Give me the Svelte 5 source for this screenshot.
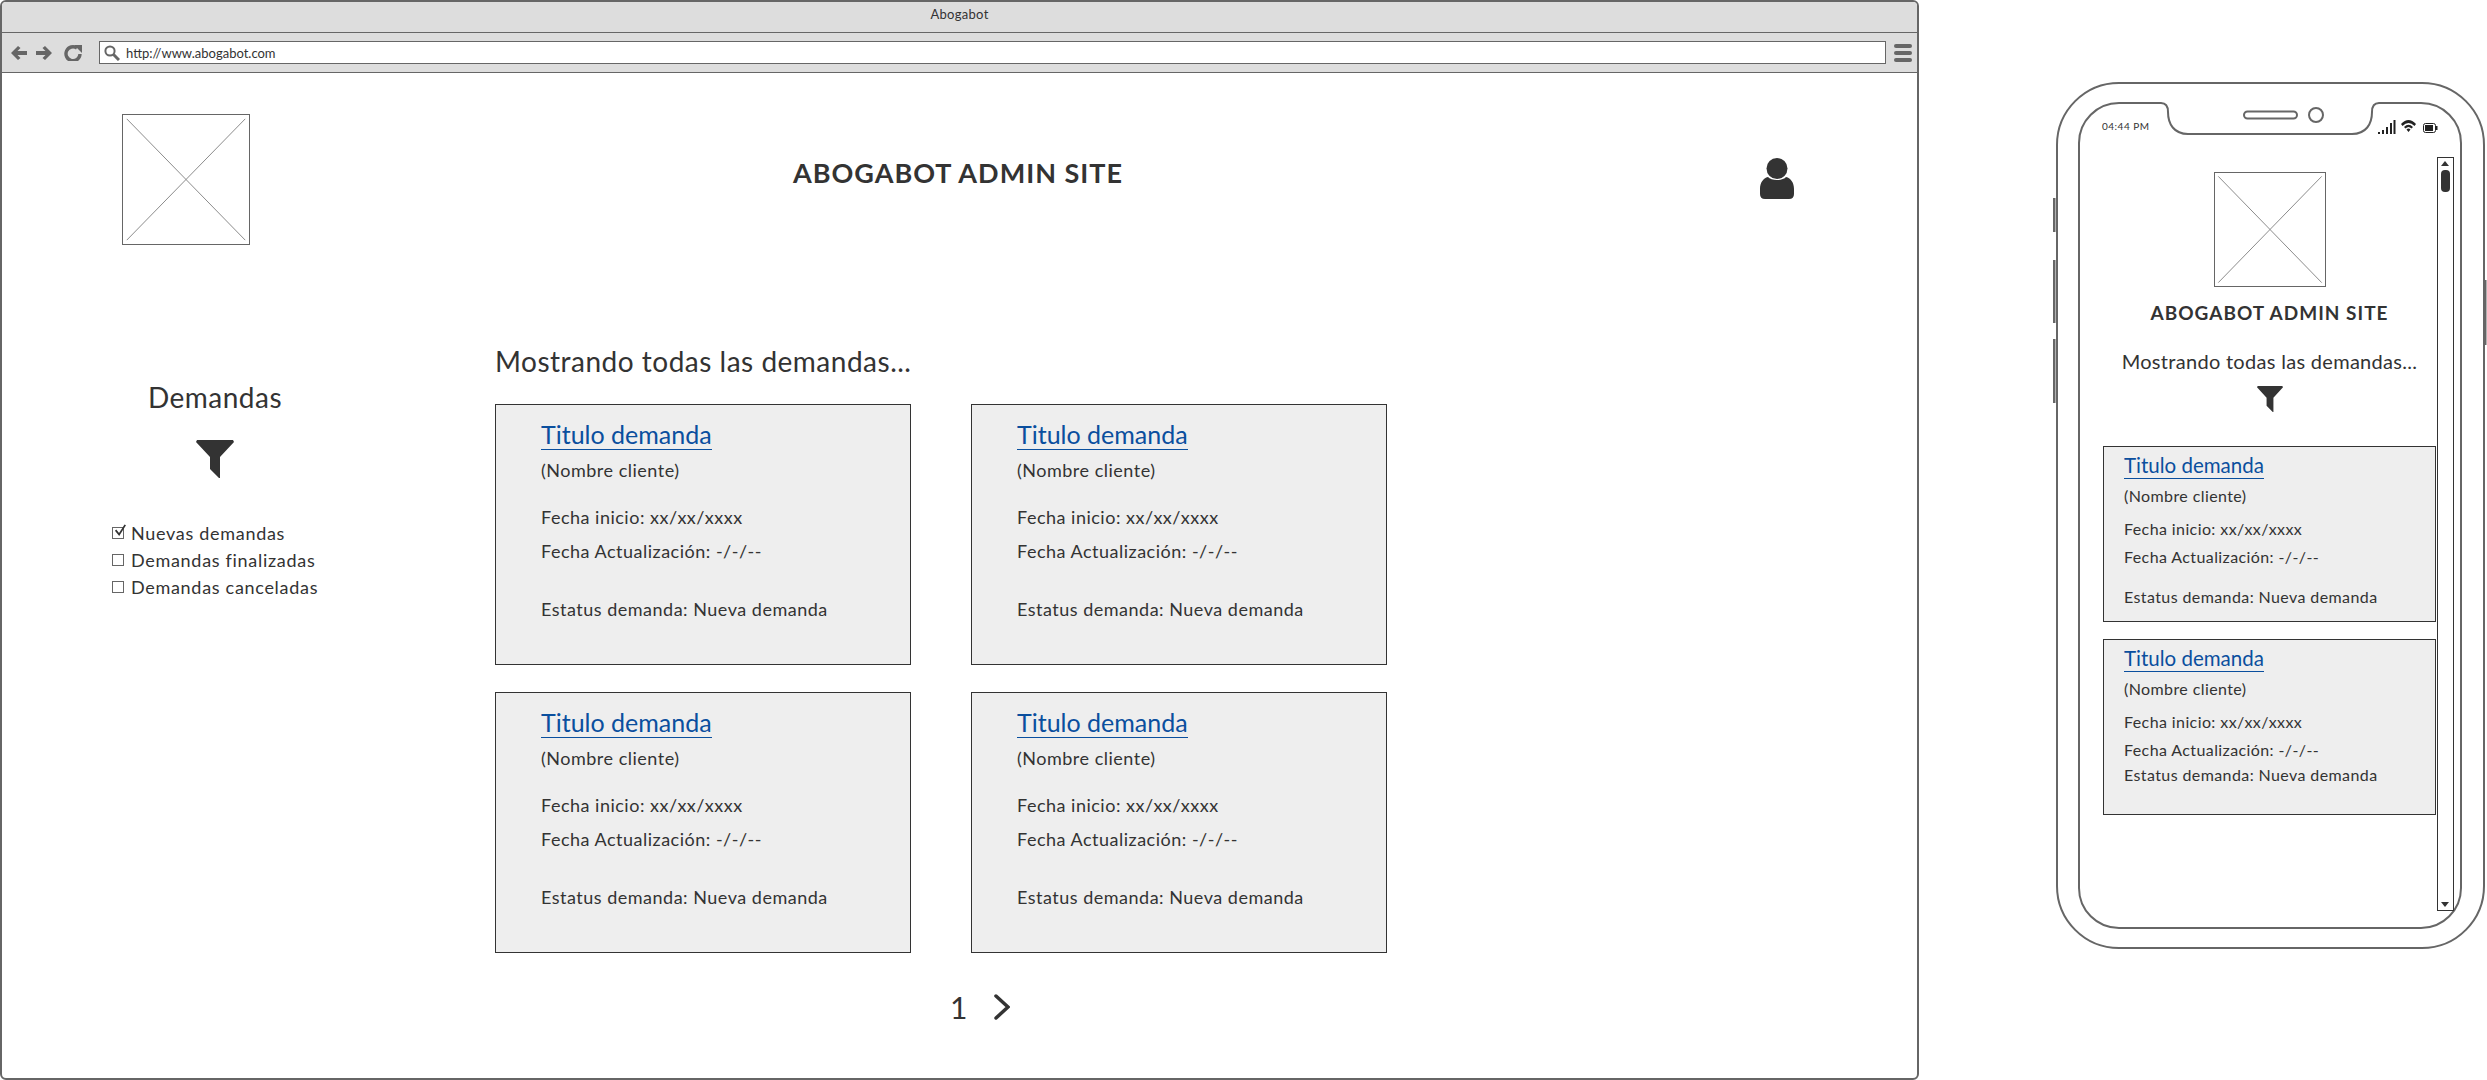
<script>
  const cards = [1, 2, 3, 4];
  const filters = [
    { label: 'Nuevas demandas', checked: true },
    { label: 'Demandas finalizadas', checked: false },
    { label: 'Demandas canceladas', checked: false }
  ];
</script>

{#snippet placeholder(cls)}
  <svg class="placeholder {cls}" viewBox="0 0 100 100" preserveAspectRatio="none">
    <path d="M3 3 L97 97 M97 3 L3 97" stroke="#8c8c8c" stroke-width="1" vector-effect="non-scaling-stroke" fill="none" />
  </svg>
{/snippet}

{#snippet funnel(cls)}
  <svg class={cls} viewBox="0 0 38 38">
    <path d="M1 0 H37 L38 2 L24 17 V38 L23 38 L14 29 V17 L0 2 Z" fill="#333" />
  </svg>
{/snippet}

{#snippet card(short)}
  <div class="card" class:short>
    <a class="card-title" href="#top">Titulo demanda</a>
    <div class="client">(Nombre cliente)</div>
    <div class="start">Fecha inicio: xx/xx/xxxx</div>
    <div class="updated">Fecha Actualización: -/-/--</div>
    <div class="status">Estatus demanda: Nueva demanda</div>
  </div>
{/snippet}

<div class="page">
  <div class="browser">
    <div class="titlebar">Abogabot</div>
    <div class="toolbar">
      <svg class="nav" viewBox="0 0 71 16">
        <path d="M0 8 L7 1 L9.500 3 L6.500 6 H16 V10 H6.500 L9.500 13 L7 15 Z" fill="#666" />
        <path d="M41 8 L34 1 L31.500 3 L34.500 6 H25 V10 H34.500 L31.500 13 L34 15 Z" fill="#666" />
        <path d="M69 9 A7 7 0 1 1 66 3" fill="none" stroke="#666" stroke-width="3.4" />
        <path d="M63 0 H71 V8 Z" fill="#666" />
      </svg>
      <div class="address">
        <svg class="search" viewBox="0 0 16 16">
          <circle cx="6" cy="6" r="4.6" fill="none" stroke="#666" stroke-width="2" />
          <path d="M9.5 9.5 L15 15" stroke="#666" stroke-width="3" />
        </svg>
        <span>http://www.abogabot.com</span>
      </div>
      <div class="burger"><i></i><i></i><i></i></div>
    </div>

    <div class="content">
      <header class="header">
        {@render placeholder('logo')}
        <h1>ABOGABOT ADMIN SITE</h1>
        <svg class="user" viewBox="0 0 34 41">
          <circle cx="17" cy="10.5" r="10.5" fill="#333" />
          <path d="M8 19 C11 23 23 23 26 19 C31 20 34 25 34 31 V36 Q34 41 29 41 H5 Q0 41 0 36 V31 C0 25 3 20 8 19 Z" fill="#333" />
        </svg>
      </header>

      <div class="columns">
        <aside class="sidebar">
          <h2>Demandas</h2>
          {@render funnel('funnel')}
          <ul>
            {#each filters as f}
              <li>
                <span class="box">
                  {#if f.checked}
                    <svg viewBox="0 0 16 16"><path d="M3 7 L7 12 L14 1" fill="none" stroke="#333" stroke-width="2" /></svg>
                  {/if}
                </span>
                {f.label}
              </li>
            {/each}
          </ul>
        </aside>

        <main class="results">
          <h3>Mostrando todas las demandas...</h3>
          <div class="grid">
            {#each cards as c}
              {@render card(false)}
            {/each}
          </div>
          <div class="pager">
            <span>1</span>
            <svg viewBox="0 0 16 26"><path d="M2 2 L14 13 L2 24" fill="none" stroke="#333" stroke-width="3.500" stroke-linecap="round" /></svg>
          </div>
        </main>
      </div>
    </div>
  </div>

  <div class="phone">
    <svg class="frame" viewBox="2053 0 434 1080">
      <g fill="none" stroke="#666" stroke-width="2">
        <rect x="2057" y="83" width="427" height="865" rx="62" />
        <path d="M2119 103 H2161 Q2168 103 2168 112 C2168 124 2174 134 2188 134 H2352 C2366 134 2372 124 2372 112 Q2372 103 2379 103 H2421 A40 40 0 0 1 2461 143 V888 A40 40 0 0 1 2421 928 H2119 A40 40 0 0 1 2079 888 V143 A40 40 0 0 1 2119 103 Z" />
        <rect x="2244" y="111.500" width="53" height="7" rx="3.500" />
        <circle cx="2316" cy="115" r="7" />
        <path d="M2054 198 V232 M2054 260 V323 M2054 339 V403 M2485 280 V345" stroke-width="3" />
      </g>
      <g fill="#222">
        <path d="M2378 132 h2 v2 h-2z M2382 130 h2 v4 h-2z M2386 127 h2 v7 h-2z M2390 123 h2 v11 h-2z M2393.500 120 h2 v14 h-2z" />
        <path d="M2401 124 Q2408.500 116 2416 124 L2414.500 126 Q2408.500 120 2402.500 126 Z M2404 127 Q2408.500 122.500 2413 127 L2411.500 128.500 Q2408.500 125.500 2405.500 128.500 Z M2406.500 129.500 Q2408.500 127.500 2410.500 129.500 L2408.500 132 Z" />
        <path d="M2425 125 h8 v6 h-8z" />
        <rect x="2423.500" y="123.500" width="12" height="9" rx="2" fill="none" stroke="#222" />
        <rect x="2436" y="126" width="1.500" height="4" />
      </g>
    </svg>
    <span class="clock">04:44 PM</span>

    <div class="scrollbar">
      <i class="up"></i>
      <i class="thumb"></i>
      <i class="down"></i>
    </div>

    <div class="screen">
      {@render placeholder('logo-small')}
      <div class="phone-title">ABOGABOT ADMIN SITE</div>
      <div class="phone-heading">Mostrando todas las demandas...</div>
      {@render funnel('funnel-small')}
      <div class="phone-cards">
        {@render card(false)}
        {@render card(true)}
      </div>
    </div>
  </div>
</div>

<style>
  :global(body) {
    margin: 0;
    background: #fff;
  }

  .page {
    display: flex;
    width: 2487px;
    height: 1080px;
    overflow: hidden;
    font-family: Lato, "Open Sans", sans-serif;
    color: #333;
  }

  h1, h2, h3, ul {
    margin: 0;
    padding: 0;
    font-weight: 400;
  }

  .browser {
    width: 1919px;
    height: 1080px;
    flex: none;
    box-sizing: border-box;
    border: 2px solid #666;
    border-radius: 6px;
    overflow: hidden;
  }

  .titlebar {
    height: 30px;
    line-height: 25px;
    background: #ddd;
    border-bottom: 1px solid #666;
    text-align: center;
    font-size: 13px;
    letter-spacing: 0.300px;
  }

  .toolbar {
    height: 39px;
    background: #ddd;
    border-bottom: 1px solid #666;
    display: flex;
    align-items: center;
    padding: 0 5px 0 9px;
  }

  .nav {
    width: 71px;
    height: 16px;
    margin-right: 17px;
    flex: none;
  }

  .address {
    flex: 1;
    height: 23px;
    border: 1px solid #666;
    background: #fff;
    box-sizing: border-box;
    display: flex;
    align-items: center;
    font-size: 13px;
    padding-left: 4px;
    gap: 6px;
  }

  .search {
    width: 16px;
    height: 16px;
  }

  .burger {
    width: 18px;
    margin-left: 8px;
    display: flex;
    flex-direction: column;
    gap: 3px;
  }

  .burger i {
    height: 4px;
    border-radius: 2px;
    background: #666;
  }

  .header {
    display: grid;
    grid-template-columns: 1fr auto 1fr;
    padding: 41px 123px 0 120px;
  }

  .placeholder {
    display: block;
    box-sizing: border-box;
    border: 1px solid #666;
    background: #fff;
  }

  .logo {
    width: 128px;
    height: 131px;
  }

  h1 {
    font-size: 27px;
    font-weight: 700;
    letter-spacing: 1px;
    margin-top: 42px;
    line-height: 34px;
    height: 34px;
  }

  .user {
    width: 34px;
    height: 41px;
    margin-top: 44px;
    justify-self: end;
  }

  .columns {
    display: flex;
    margin-top: 99px;
  }

  .sidebar {
    width: 493px;
    flex: none;
    padding-left: 110px;
    box-sizing: border-box;
    padding-top: 36px;
  }

  h2 {
    font-size: 28px;
    line-height: 34px;
    width: 206px;
    text-align: center;
    letter-spacing: 0.500px;
  }

  .funnel {
    display: block;
    width: 38px;
    height: 38px;
    margin: 26px 0 0 84px;
  }

  .sidebar ul {
    list-style: none;
    margin-top: 41px;
  }

  .sidebar li {
    display: flex;
    align-items: center;
    gap: 7px;
    height: 27px;
    font-size: 18px;
    letter-spacing: 0.700px;
  }

  .box {
    width: 12px;
    height: 12px;
    border: 1px solid #666;
    box-sizing: border-box;
    position: relative;
    flex: none;
  }

  .box svg {
    position: absolute;
    left: 0;
    top: -4px;
    width: 14px;
    height: 14px;
  }

  h3 {
    font-size: 28px;
    line-height: 34px;
    height: 34px;
    margin-bottom: 26px;
    letter-spacing: 0.500px;
  }

  .grid {
    display: grid;
    grid-template-columns: 416px 416px;
    grid-auto-rows: 261px;
    column-gap: 60px;
    row-gap: 27px;
  }

  .card {
    box-sizing: border-box;
    border: 1px solid #333;
    background: #eee;
    padding: 0 0 0 45px;
    font-size: 18px;
    line-height: 22px;
    letter-spacing: 0.500px;
  }

  .card-title {
    display: inline-block;
    margin-top: 15px;
    font-size: 25px;
    line-height: 29px;
    letter-spacing: 0;
    color: #0a4f9e;
    text-decoration: none;
    border-bottom: 1px solid #0a4f9e;
  }

  .client {
    margin-top: 9px;
  }

  .start {
    margin-top: 25px;
  }

  .updated {
    margin-top: 12px;
  }

  .status {
    margin-top: 36px;
  }

  .pager {
    display: flex;
    align-items: center;
    width: 416px;
    margin: 37px 0 0 455px;
    gap: 27px;
    font-size: 30px;
    line-height: 34px;
  }

  .pager svg {
    width: 16px;
    height: 26px;
  }

  .phone {
    position: relative;
    width: 434px;
    height: 1080px;
    margin-left: 134px;
    flex: none;
  }

  .frame {
    position: absolute;
    inset: 0;
    width: 434px;
    height: 1080px;
  }

  .clock {
    position: absolute;
    left: 49px;
    top: 120px;
    font-size: 10px;
    line-height: 13px;
    letter-spacing: 0.500px;
  }

  .scrollbar {
    position: absolute;
    left: 384px;
    top: 157px;
    width: 17px;
    height: 754px;
    box-sizing: border-box;
    border: 1px solid #333;
    background: #fff;
  }

  .up, .down {
    position: absolute;
    left: 3px;
    border-left: 4.500px solid transparent;
    border-right: 4.500px solid transparent;
  }

  .up {
    top: 3px;
    border-bottom: 5px solid #333;
  }

  .down {
    bottom: 3px;
    border-top: 5px solid #333;
  }

  .thumb {
    position: absolute;
    left: 3px;
    top: 12px;
    width: 9px;
    height: 22px;
    border-radius: 4px;
    background: #333;
  }

  .screen {
    position: absolute;
    left: 50px;
    top: 172px;
    width: 333px;
    display: flex;
    flex-direction: column;
    align-items: center;
  }

  .logo-small {
    width: 112px;
    height: 115px;
  }

  .phone-title {
    margin-top: 14px;
    font-size: 19px;
    font-weight: 700;
    letter-spacing: 1px;
    line-height: 24px;
  }

  .phone-heading {
    margin-top: 24px;
    font-size: 20px;
    line-height: 24px;
    letter-spacing: 0.300px;
  }

  .funnel-small {
    display: block;
    width: 26px;
    height: 26px;
    margin-top: 13px;
  }

  .phone-cards {
    width: 333px;
    margin-top: 34px;
    display: flex;
    flex-direction: column;
    gap: 17px;
  }

  .phone-cards .card {
    height: 176px;
    padding-left: 20px;
    font-size: 16px;
    line-height: 20px;
    letter-spacing: 0.400px;
  }

  .phone-cards .card-title {
    margin-top: 6px;
    font-size: 20.500px;
    line-height: 25px;
    letter-spacing: 0;
  }

  .phone-cards .client {
    margin-top: 7px;
  }

  .phone-cards .start {
    margin-top: 13px;
  }

  .phone-cards .updated {
    margin-top: 8px;
  }

  .phone-cards .status {
    margin-top: 20px;
  }

  .phone-cards .card.short .status {
    margin-top: 5px;
  }
</style>
